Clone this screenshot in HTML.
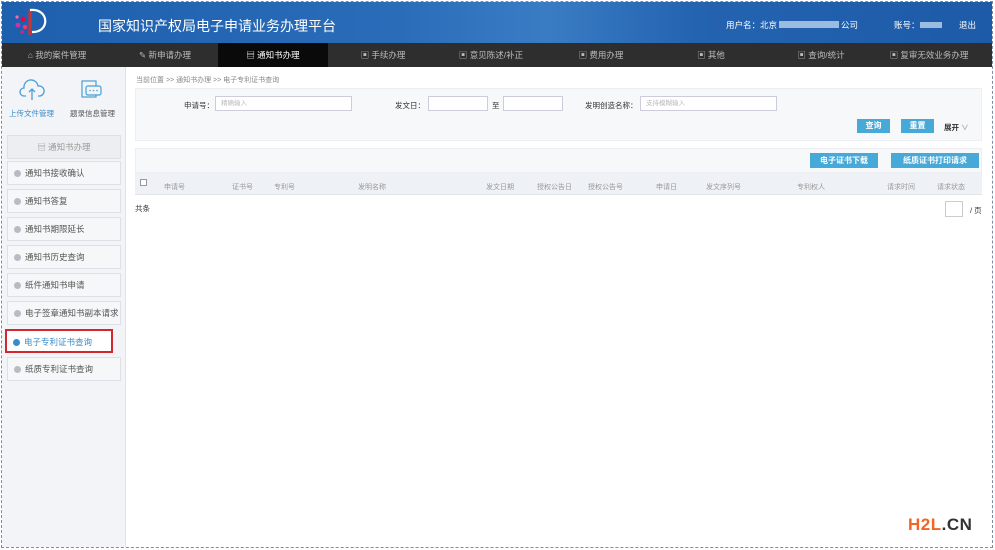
<!DOCTYPE html>
<html><head><meta charset="utf-8"><style>
*{margin:0;padding:0;box-sizing:border-box}
body{width:995px;height:550px;overflow:hidden;background:#fff;font-family:"Liberation Sans","Noto Sans CJK SC",sans-serif;position:relative;font-size:8px;color:#555}
.frame{position:absolute;left:1px;top:1px;width:992px;height:547px;border:1px dashed #7a8ea8}
.hdr{position:absolute;left:2px;top:2px;width:990px;height:41px;background:linear-gradient(90deg,#1e5fae 0%,#2a6cb8 40%,#3a7cc4 55%,#2463b0 70%,#1d5ba8 100%)}
.title{position:absolute;left:96px;top:14px;color:#fff;font-size:14px}
.user{position:absolute;top:17px;color:#fff;font-size:8.5px}
.nav{position:absolute;left:2px;top:43px;width:990px;height:24px;background:#2e2e2e}
.nav div{position:absolute;top:0;height:24px;line-height:24px;width:110px;text-align:center;color:#bbb;font-size:8.5px}
.nav .act{background:#0a0a0a;color:#fff}
.side{position:absolute;left:2px;top:67px;width:124px;height:480px;background:#f2f4f7;border-right:1px solid #dfe3e8}
.item{position:absolute;left:5px;width:114px;height:24px;border:1px solid #dde1e6;background:#f6f7f9;line-height:22px;padding-left:6px;font-size:8.5px;color:#555}
.item i{display:inline-block;width:7px;height:7px;border-radius:50%;background:#b8bcc2;margin-right:4px;vertical-align:-1px}
.lbl{position:absolute;font-size:7.5px;color:#333}
.inp{position:absolute;height:15px;border:1px solid #ccd;background:#fff;font-size:6.5px;color:#bbb;line-height:13px;padding-left:5px}
.btn{position:absolute;background:#47a9d8;color:#fff;font-size:8px;text-align:center;font-weight:bold}
.th{position:absolute;top:182px;font-size:7px;color:#999}
</style></head><body>
<div class="frame"></div>
<div class="hdr">
<svg style="position:absolute;left:8px;top:3px" width="40" height="34" viewBox="0 0 40 34"><path d="M20 4 L20 30" stroke="#c33" stroke-width="3"/><path d="M20 5 C40 3 40 28 22 27" stroke="#fff" stroke-width="2.2" fill="none"/><circle cx="13" cy="14" r="2.4" fill="#e04"/><circle cx="8" cy="20" r="2.4" fill="#c3a"/><circle cx="15" cy="22" r="2.2" fill="#f36"/><circle cx="7" cy="12" r="1.6" fill="#f6a"/><circle cx="12" cy="27" r="1.6" fill="#d27"/></svg>
<div class="title">国家知识产权局电子申请业务办理平台</div>
<div class="user" style="left:724px">用户名：北京<span style="display:inline-block;width:60px;height:7px;background:#9bbbe0;margin:0 2px"></span>公司</div>
<div class="user" style="left:892px">账号：<span style="display:inline-block;width:22px;height:6px;background:#9bbbe0"></span></div>
<div class="user" style="left:957px">退出</div>
</div>
<div class="nav">
<div style="left:0">⌂ 我的案件管理</div><div style="left:108px">✎ 新申请办理</div><div class="act" style="left:216px">▤ 通知书办理</div><div style="left:326px">▣ 手续办理</div><div style="left:434px">▣ 意见陈述/补正</div><div style="left:544px">▣ 费用办理</div><div style="left:654px">▣ 其他</div><div style="left:764px">▣ 查询/统计</div><div style="left:872px">▣ 复审无效业务办理</div>
</div>
<div class="side">
<svg style="position:absolute;left:17px;top:12px" width="26" height="22" viewBox="0 0 26 22"><path d="M7 17 H5 A4 4 0 0 1 5 9 A7 7 0 0 1 19 7 A5 5 0 0 1 21 17 H19" stroke="#4a9fd4" fill="none" stroke-width="1.3"/><path d="M13 21 V10 M10 13 L13 10 L16 13" stroke="#4a9fd4" fill="none" stroke-width="1.3"/></svg>
<svg style="position:absolute;left:78px;top:12px" width="24" height="22" viewBox="0 0 24 22"><rect x="2" y="2" width="14" height="16" fill="none" stroke="#4a9fd4" stroke-width="1.2"/><rect x="6" y="7" width="15" height="9" rx="2" fill="#f2f4f7" stroke="#4a9fd4" stroke-width="1.2"/><circle cx="10" cy="11.5" r=".8" fill="#4a9fd4"/><circle cx="13.5" cy="11.5" r=".8" fill="#4a9fd4"/><circle cx="17" cy="11.5" r=".8" fill="#4a9fd4"/></svg>
<div style="position:absolute;left:7px;top:41px;font-size:7.5px;color:#3a8cc8">上传文件管理</div>
<div style="position:absolute;left:68px;top:41px;font-size:7.5px;color:#555">题录信息管理</div>
<div class="item" style="top:68px;text-align:center;padding:0;color:#999;background:#eceef2">▤ 通知书办理</div>
<div class="item" style="top:94px"><i></i>通知书接收确认</div>
<div class="item" style="top:122px"><i></i>通知书答复</div>
<div class="item" style="top:150px"><i></i>通知书期限延长</div>
<div class="item" style="top:178px"><i></i>通知书历史查询</div>
<div class="item" style="top:206px"><i></i>纸件通知书申请</div>
<div class="item" style="top:234px"><i></i>电子签章通知书副本请求</div>
<div class="item" style="top:262px;left:3px;width:108px;border:2px solid #d0282e;background:#fff;color:#3a8cc8"><i style="background:#3a8cc8"></i>电子专利证书查询</div>
<div class="item" style="top:290px"><i></i>纸质专利证书查询</div>
</div>
<div style="position:absolute;left:136px;top:75px;font-size:7px;color:#888">当前位置 &gt;&gt; 通知书办理 &gt;&gt; 电子专利证书查询</div>
<div style="position:absolute;left:135px;top:88px;width:847px;height:53px;background:#f7f8fa;border:1px solid #eceef1"></div>
<div class="lbl" style="left:184px;top:100px">申请号：</div><div class="inp" style="left:215px;top:96px;width:137px">精确输入</div>
<div class="lbl" style="left:395px;top:100px">发文日：</div><div class="inp" style="left:428px;top:96px;width:60px"></div>
<div class="lbl" style="left:492px;top:100px">至</div><div class="inp" style="left:503px;top:96px;width:60px"></div>
<div class="lbl" style="left:585px;top:100px">发明创造名称：</div><div class="inp" style="left:640px;top:96px;width:137px">支持模糊输入</div>
<div class="btn" style="left:857px;top:119px;width:33px;height:14px;line-height:14px">查询</div>
<div class="btn" style="left:901px;top:119px;width:33px;height:14px;line-height:14px">重置</div>
<div class="lbl" style="left:944px;top:122px;font-weight:bold">展开 <span style="color:#aaa">∨</span></div>
<div style="position:absolute;left:135px;top:148px;width:847px;height:25px;background:#f7f8fa;border:1px solid #eceef1"></div>
<div class="btn" style="left:810px;top:153px;width:68px;height:15px;line-height:15px">电子证书下载</div>
<div class="btn" style="left:891px;top:153px;width:88px;height:15px;line-height:15px">纸质证书打印请求</div>
<div style="position:absolute;left:135px;top:173px;width:847px;height:22px;background:#eef1f5;border-bottom:1px solid #e2e5ea"></div>
<div style="position:absolute;left:140px;top:179px;width:7px;height:7px;border:1px solid #999;background:#fff"></div>
<div class="th" style="left:164px">申请号</div><div class="th" style="left:232px">证书号</div><div class="th" style="left:274px">专利号</div><div class="th" style="left:358px">发明名称</div><div class="th" style="left:486px">发文日期</div><div class="th" style="left:537px">授权公告日</div><div class="th" style="left:588px">授权公告号</div><div class="th" style="left:656px">申请日</div><div class="th" style="left:706px">发文序列号</div><div class="th" style="left:797px">专利权人</div><div class="th" style="left:887px">请求时间</div><div class="th" style="left:937px">请求状态</div>
<div class="lbl" style="left:135px;top:203px">共条</div>
<div style="position:absolute;left:945px;top:201px;width:18px;height:16px;border:1px solid #ccc"></div>
<div class="lbl" style="left:970px;top:205px">/ 页</div>
<div style="position:absolute;left:908px;top:515px;font-size:17px;font-weight:bold;color:#f26522;letter-spacing:.5px">H2L<span style="color:#333">.CN</span></div>
</body></html>
